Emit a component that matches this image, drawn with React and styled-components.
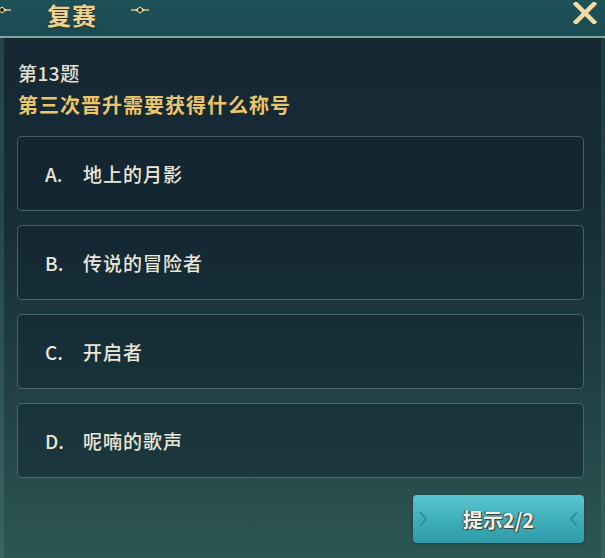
import styled, { createGlobalStyle } from 'styled-components';

const GlobalStyle = createGlobalStyle`
  html, body {
    margin: 0;
    padding: 0;
    background: #1b3f45;
  }
  body {
    font-family: "Noto Sans CJK SC", "Noto Sans", sans-serif;
  }
`;

const options = [
  { key: 'A', text: '地上的月影' },
  { key: 'B', text: '传说的冒险者' },
  { key: 'C', text: '开启者' },
  { key: 'D', text: '呢喃的歌声' },
];

const Ornament = () => (
  <svg width="18" height="10" viewBox="0 0 18 10">
    <path d="M0 5 L5 5 M13 5 L18 5" stroke="#d8c48a" strokeWidth="1.4" />
    <path d="M4 5 L9 1.5 L14 5 L9 8.5 Z" fill="#e9d8a4" />
    <circle cx="9" cy="5" r="2" fill="#2a2a1e" />
  </svg>
);

const CloseIcon = () => (
  <svg width="24" height="22" viewBox="0 0 24 22">
    <path
      d="M3 2 L21 20 M21 2 L3 20"
      stroke="#f1dca4"
      strokeWidth="4.5"
      strokeLinecap="square"
    />
  </svg>
);

const Chevron = ({ dir }) => (
  <svg width="8" height="16" viewBox="0 0 8 16">
    <path
      d={dir === 'right' ? 'M1 1 L7 8 L1 15' : 'M7 1 L1 8 L7 15'}
      fill="none"
      stroke="#2a8a95"
      strokeWidth="1.6"
    />
  </svg>
);

const App = () => {
  return (
    <>
      <GlobalStyle />
      <Frame>
        <TitleBar>
          <OrnamentSlot $left={-7}>
            <Ornament />
          </OrnamentSlot>
          <Title>复赛</Title>
          <OrnamentSlot $left={34}>
            <Ornament />
          </OrnamentSlot>
          <CloseButton>
            <CloseIcon />
          </CloseButton>
        </TitleBar>
        <Body>
          <QuestionNo>第13题</QuestionNo>
          <Question>第三次晋升需要获得什么称号</Question>
          <OptionList>
            {options.map((o) => (
              <Option key={o.key}>
                <Letter>{o.key}.</Letter>
                <span>{o.text}</span>
              </Option>
            ))}
          </OptionList>
          <Footer>
            <HintButton>
              <Chevron dir="right" />
              <HintLabel>提示2/2</HintLabel>
              <Chevron dir="left" />
            </HintButton>
          </Footer>
        </Body>
      </Frame>
    </>
  );
};

export default App;

const Frame = styled.div`
  width: 605px;
  height: 558px;
  display: flex;
  flex-direction: column;
  overflow: hidden;
`;

const TitleBar = styled.div`
  height: 36px;
  flex-shrink: 0;
  display: flex;
  align-items: flex-start;
  background: linear-gradient(180deg, #1f5159 0%, #1c4a52 100%);
  border-bottom: 2px solid #7ea69e;
`;

const OrnamentSlot = styled.div`
  margin-left: ${(p) => p.$left}px;
  margin-top: 5px;
  display: flex;
`;

const Title = styled.div`
  margin-left: 36px;
  margin-top: 0;
  font-size: 24px;
  font-weight: 700;
  letter-spacing: 1px;
  line-height: 29px;
  color: #ead493;
  text-shadow: 0 1px 0 #3a3020, 0 0 2px rgba(40, 30, 10, 0.6);
`;

const CloseButton = styled.div`
  margin-left: auto;
  margin-right: 8px;
  margin-top: 2px;
  display: flex;
`;

const Body = styled.div`
  flex: 1;
  display: flex;
  flex-direction: column;
  padding: 22px 21px 0 17px;
  background: linear-gradient(180deg, #152732 0%, #172d38 35%, #1f3e44 65%, #2d5652 100%);
  box-shadow: inset 4px 0 0 rgba(90, 150, 140, 0.25), inset -4px 0 0 rgba(90, 150, 140, 0.2);
`;

const QuestionNo = styled.div`
  margin-left: 1px;
  font-size: 19px;
  line-height: 26px;
  letter-spacing: 0.5px;
  color: #e6e1d2;
  font-weight: 500;
`;

const Question = styled.div`
  margin-left: 1px;
  margin-top: 5px;
  font-size: 20px;
  line-height: 28px;
  letter-spacing: 1px;
  font-weight: 700;
  color: #e9c66a;
`;

const OptionList = styled.div`
  margin-top: 17px;
  display: flex;
  flex-direction: column;
  gap: 14px;
`;

const Option = styled.div`
  height: 75px;
  box-sizing: border-box;
  display: flex;
  align-items: center;
  padding-left: 27px;
  border: 1.5px solid rgba(120, 155, 155, 0.5);
  border-radius: 5px;
  background: rgba(16, 33, 44, 0.45);
  font-size: 19px;
  line-height: 26px;
  letter-spacing: 1px;
  font-weight: 500;
  color: #ebe6d8;
`;

const Letter = styled.span`
  width: 38px;
  letter-spacing: 0;
`;

const Footer = styled.div`
  margin-top: 17px;
  display: flex;
  justify-content: flex-end;
`;

const HintButton = styled.div`
  width: 171px;
  height: 48px;
  box-sizing: border-box;
  display: flex;
  align-items: center;
  justify-content: space-between;
  padding: 0 6px;
  border-radius: 4px;
  background: linear-gradient(180deg, #58c6cf 0%, #3fb0bb 50%, #2f9ba7 100%);
  box-shadow: 0 1px 2px rgba(0, 0, 0, 0.35);
`;

const HintLabel = styled.span`
  font-size: 20px;
  font-weight: 700;
  color: #f3efe2;
  text-shadow: 1px 1px 1px #3a3a32, -1px 0 1px #3a3a32;
`;
